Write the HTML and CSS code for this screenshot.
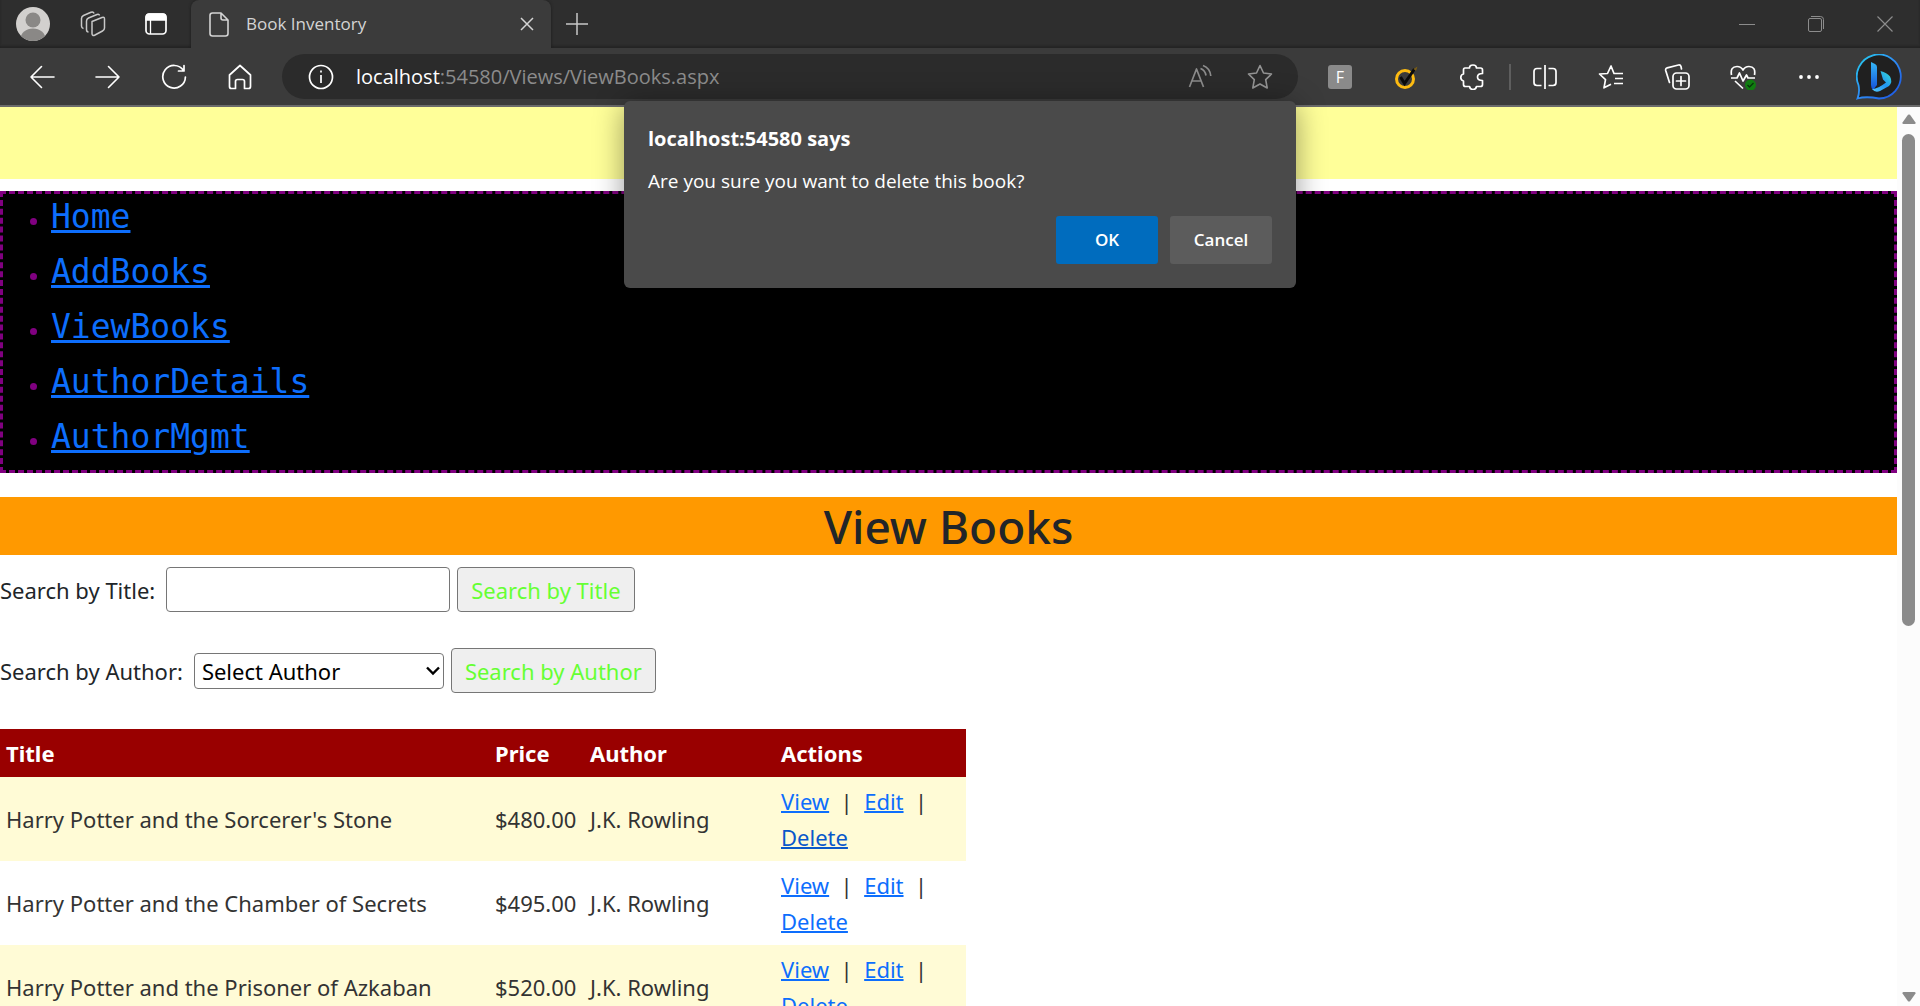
FILE: index.html
```html
<!DOCTYPE html>
<html lang="en">
<head>
<meta charset="utf-8">
<title>Book Inventory</title>
<link rel="stylesheet" href="styles.css">
</head>
<body>
<header class="browser">
  <div class="tabstrip">
    <div class="strip-tools">
      <button class="icon-btn avatar" aria-label="Profile"><svg width="34" height="34" viewBox="0 0 34 34"><defs><clipPath id="face"><circle cx="17" cy="17" r="17"/></clipPath></defs><g clip-path="url(#face)"><rect width="34" height="34" fill="#d2d0ce"/><circle cx="17" cy="13" r="7.5" fill="#8a8886"/><ellipse cx="17" cy="32" rx="12.5" ry="10.500" fill="#8a8886"/></g></svg></button>
      <button class="icon-btn" aria-label="Workspaces"><svg width="26" height="26" viewBox="0 0 26 26" fill="none" stroke="#c8c8c8" stroke-width="1.500" stroke-linejoin="round"><path d="M12 10.500 22 6.500Q24.500 5.500 24.500 8V17Q24.500 19 22.500 20L15 24Q12 25.500 12 22.500Z"/><path d="M8.500 21Q6.500 21 6.500 18.500V10Q6.500 8 8.500 7L17 3.500Q19 2.800 19.500 4.500"/><path d="M3.500 17.500Q1.500 17 1.500 15V7.500Q1.500 5.500 3.500 4.500L11 1.300Q13.500.500 14 2.500"/></svg></button>
      <button class="icon-btn" aria-label="Tab actions"><svg width="22" height="22" viewBox="0 0 22 22"><rect x="1" y="1" width="20" height="20" rx="3.500" fill="none" stroke="#fff" stroke-width="1.700"/><path d="M1 7V4Q1 1 4 1H18Q21 1 21 4V7ZM5.500 7V21" fill="#fff" stroke="#fff" stroke-width="1.300"/></svg></button>
    </div>
    <div class="tab">
      <svg width="20" height="25" viewBox="0 0 20 25" fill="none" stroke="#d4d4d4" stroke-width="1.600" stroke-linejoin="round"><path d="M1 3.500Q1 1 3.500 1H12L19 8V21.500Q19 24 16.500 24H3.500Q1 24 1 21.500ZM12 1V6Q12 8 14 8H19"/></svg>
      <span class="tab-title">Book Inventory</span>
      <button class="icon-btn" aria-label="Close tab"><svg width="14" height="14" viewBox="0 0 14 14" stroke="#d4d4d4" stroke-width="1.500"><path d="M1 1 13 13M13 1 1 13"/></svg></button>
    </div>
    <button class="icon-btn new-tab" aria-label="New tab"><svg width="22" height="22" viewBox="0 0 22 22" stroke="#c8c8c8" stroke-width="1.500"><path d="M11 0V22M0 11H22"/></svg></button>
    <div class="window-tools">
      <button class="icon-btn" aria-label="Minimize"><svg width="16" height="16" viewBox="0 0 16 16" stroke="#8c8c8c"><path d="M0 8.500H16"/></svg></button>
      <button class="icon-btn" aria-label="Restore"><svg width="16" height="16" viewBox="0 0 16 16" fill="none" stroke="#8c8c8c"><rect x=".500" y="2.500" width="13" height="13" rx="1.500"/><path d="M3 .500H12.500Q15.500.500 15.500 3.500V13"/></svg></button>
      <button class="icon-btn" aria-label="Close"><svg width="16" height="16" viewBox="0 0 16 16" stroke="#8c8c8c" stroke-width="1.200"><path d="M.500.500 15.500 15.500M15.500.500.500 15.500"/></svg></button>
    </div>
  </div>
  <div class="toolbar">
    <nav class="nav-tools" aria-label="Browser navigation">
      <button class="icon-btn" aria-label="Back"><svg width="26" height="26" viewBox="0 0 26 26" fill="none" stroke="#fff" stroke-width="1.600" stroke-linecap="round" stroke-linejoin="round"><path d="M25 13H2M12.500 2.500 2 13 12.500 23.500"/></svg></button>
      <button class="icon-btn" aria-label="Forward"><svg width="26" height="26" viewBox="0 0 26 26" fill="none" stroke="#fff" stroke-width="1.600" stroke-linecap="round" stroke-linejoin="round"><path d="M1 13H24M13.500 2.500 24 13 13.500 23.500"/></svg></button>
      <button class="icon-btn" aria-label="Refresh"><svg width="26" height="26" viewBox="0 0 26 26" fill="none" stroke="#fff" stroke-width="1.700" stroke-linecap="round" stroke-linejoin="round"><path d="M22.500 6.500A11.300 11.300 0 1 0 24.400 13M23 1.500V7H17.500"/></svg></button>
      <button class="icon-btn" aria-label="Home"><svg width="26" height="26" viewBox="0 0 26 26" fill="none" stroke="#fff" stroke-width="1.700" stroke-linejoin="round"><path d="M2.500 11 13 1.500 23.500 11V22.500Q23.500 24.500 21.500 24.500H17.500V17.500Q17.500 15.500 15.500 15.500H10.500Q8.500 15.500 8.500 17.500V24.500H4.500Q2.500 24.500 2.500 22.500Z"/></svg></button>
    </nav>
    <div class="address">
      <svg width="26" height="26" viewBox="0 0 26 26" fill="none" stroke="#fff" stroke-width="1.700"><circle cx="13" cy="13" r="11.500"/><path d="M13 11V19M13 6.500V8.500"/></svg>
      <div class="url"><span class="url-host">localhost</span>:54580/Views/ViewBooks.aspx</div>
      <button class="icon-btn" aria-label="Read aloud"><svg width="26" height="26" viewBox="0 0 26 26" fill="none" stroke="#8c8c8c" stroke-width="1.700" stroke-linejoin="round"><path d="M2.500 23 9.500 5 16.500 23M5 17H14M13.500 4.500Q18 6 19 11.500M16 1.500Q23 4 23.800 12"/></svg></button>
      <button class="icon-btn" aria-label="Add to favorites"><svg width="26" height="26" viewBox="0 0 26 26" fill="none" stroke="#949494" stroke-width="1.600" stroke-linejoin="round"><path d="M13 1.500 16.500 9 24.500 10 18.700 15.600 20.200 24 13 20 5.800 24 7.300 15.600 1.500 10 9.500 9Z"/></svg></button>
    </div>
    <div class="ext-tools">
      <button class="icon-btn ext-f" aria-label="Extension F">F</button>
      <button class="icon-btn" aria-label="Safe search"><svg width="26" height="26" viewBox="0 0 26 26" fill="none"><circle cx="12" cy="15" r="8.500" stroke="#fdbb11" stroke-width="3"/><path d="M7.500 13 11.500 19.500 21.500 5" stroke="#0b0b0b" stroke-width="3"/><path d="M20.500 5 24.500 2.500 23 7" fill="#7a5d16"/></svg></button>
      <button class="icon-btn" aria-label="Extensions"><svg width="26" height="26" viewBox="0 0 26 26" fill="none" stroke="#fff" stroke-width="1.700" stroke-linejoin="round"><path d="M5 4H9.500Q9.500 1 13 1T16.500 4H20.500Q22.500 4 22.500 6V9.500Q17.500 9.500 17.500 13T22.500 16.500V20.500Q22.500 22.500 20.500 22.500H16.500Q16 25.500 13 25.500T9.500 22.500H5.500Q3.500 22.500 3.500 20.500V17Q.800 16.500.800 13.500T3.500 10V6Q3.500 4 5 4Z"/></svg></button>
    </div>
    <div class="right-tools">
      <button class="icon-btn" aria-label="Split screen"><svg width="26" height="26" viewBox="0 0 26 26" fill="none" stroke="#fff" stroke-width="1.700"><path d="M9.500 4.500H5Q2 4.500 2 7.500V18.500Q2 21.500 5 21.500H9.500M16.500 4.500H21Q24 4.500 24 7.500V18.500Q24 21.500 21 21.500H16.500M13 1V25"/></svg></button>
      <button class="icon-btn" aria-label="Favorites"><svg width="26" height="26" viewBox="0 0 26 26" fill="none" stroke="#fff" stroke-width="1.700" stroke-linejoin="round"><path d="M20.500 9.500H16L13 2 9.500 9.500 1.500 10 7.500 15.600 6 23.800 13 20.200M17 9.500H25M17 14.500H25M16 19.500H25"/></svg></button>
      <button class="icon-btn" aria-label="Collections"><svg width="26" height="26" viewBox="0 0 26 26" fill="none" stroke="#fff" stroke-width="1.700" stroke-linecap="round"><path d="M5.500 18.500 1.700 6.500Q1.200 4.500 3.200 3.800L14.500 1Q16.500.700 17 2.500L17.500 5"/><rect x="9" y="9" width="16" height="16" rx="3.500"/><path d="M17 12.500V21.500M12.500 17H21.500"/></svg></button>
      <button class="icon-btn" aria-label="Browser essentials"><svg width="26" height="26" viewBox="0 0 26 26" fill="none" stroke="#fff" stroke-width="1.700" stroke-linejoin="round"><path d="M1.500 11Q0 2.500 7 2.500 11 2.500 13 6 15 2.500 19 2.500 26 2.500 24.500 11M1 14H7L9.500 9 13 17 16.500 11 18 14H25M5 17 13 24.500"/><circle cx="20.500" cy="21" r="5.500" fill="#107c10" stroke="none"/><path d="M17.500 21 19.500 23 23.500 19" stroke="#06330a" stroke-width="1.300"/></svg></button>
      <button class="icon-btn" aria-label="Settings and more"><svg width="26" height="26" viewBox="0 0 26 26" fill="#fff"><circle cx="5" cy="13" r="1.900"/><circle cx="13" cy="13" r="1.900"/><circle cx="21" cy="13" r="1.900"/></svg></button>
    </div>
    <button class="icon-btn bing" aria-label="Bing"><svg width="46" height="46" viewBox="0 0 46 46"><defs><linearGradient id="ring" x1="0" y1="0" x2="1" y2="1"><stop offset="0" stop-color="#25d0ee"/><stop offset=".5" stop-color="#2e8cf5"/><stop offset="1" stop-color="#1a4fe0"/></linearGradient><linearGradient id="stem" x1="0" y1="0" x2="0" y2="1"><stop offset="0" stop-color="#35b8f8"/><stop offset="1" stop-color="#1450d8"/></linearGradient><linearGradient id="bowl" x1="0" y1="1" x2="1" y2="0"><stop offset="0" stop-color="#54c8f8"/><stop offset=".5" stop-color="#2196f3"/><stop offset="1" stop-color="#38e0d0"/></linearGradient></defs><path d="M1.500 44.500Q4 38 2.500 31A22 22 0 1 1 23 44.500Q10 42 1.500 44.500Z" fill="#202020" stroke="url(#ring)" stroke-width="1.800"/><path d="M15 8 19 10Q21 11 21 13V31L17 36Q15 34 15 31Z" fill="url(#stem)"/><path d="M24.500 17Q31 18.500 34 22.500 37 28 33 32L24 37Q19 39 16 35 21 35.500 30 28.500L27 25.500Z" fill="url(#bowl)"/></svg></button>
  </div>
</header>

<div class="viewport">
  <main class="page">
    <div class="banner"></div>
    <nav class="site-nav" aria-label="Site">
      <ul>
        <li><a href="#home">Home</a></li>
        <li><a href="#addbooks">AddBooks</a></li>
        <li><a href="#viewbooks">ViewBooks</a></li>
        <li><a href="#authordetails">AuthorDetails</a></li>
        <li><a href="#authormgmt">AuthorMgmt</a></li>
      </ul>
    </nav>
    <h1>View Books</h1>
    <form class="search">
      <div class="search-row">
        <label for="title">Search by Title:</label>
        <input class="field" type="text" id="title">
        <button class="search-btn" type="button">Search by Title</button>
      </div>
      <div class="search-row">
        <label for="author">Search by Author:</label>
        <span class="select-box">
          <select id="author"><option>Select Author</option></select>
          <svg width="14" height="10" viewBox="0 0 14 10" fill="none" stroke="#000" stroke-width="2.400"><path d="M1 1.500 7 7.500 13 1.500"/></svg>
        </span>
        <button class="search-btn" type="button">Search by Author</button>
      </div>
    </form>
    <table class="books">
      <colgroup><col class="col-title"><col class="col-price"><col class="col-author"><col class="col-actions"></colgroup>
      <thead>
        <tr><th>Title</th><th>Price</th><th>Author</th><th>Actions</th></tr>
      </thead>
      <tbody>
        <tr><td>Harry Potter and the Sorcerer's Stone</td><td>$480.00</td><td>J.K. Rowling</td><td><a href="#v1">View</a>&nbsp; |&nbsp; <a href="#e1">Edit</a>&nbsp; |<br><a class="active" href="#d1">Delete</a></td></tr>
        <tr><td>Harry Potter and the Chamber of Secrets</td><td>$495.00</td><td>J.K. Rowling</td><td><a href="#v2">View</a>&nbsp; |&nbsp; <a href="#e2">Edit</a>&nbsp; |<br><a href="#d2">Delete</a></td></tr>
        <tr><td>Harry Potter and the Prisoner of Azkaban</td><td>$520.00</td><td>J.K. Rowling</td><td><a href="#v3">View</a>&nbsp; |&nbsp; <a href="#e3">Edit</a>&nbsp; |<br><a href="#d3">Delete</a></td></tr>
      </tbody>
    </table>
  </main>
  <div class="scrollbar" aria-hidden="true">
    <svg width="14" height="10" viewBox="0 0 14 10" fill="#8b8b8b"><path d="M6 .800Q7 0 8 .800L13.500 8.500Q14 10 12.500 10H1.500Q0 10 .500 8.500Z"/></svg>
    <div class="track"><div class="thumb"></div></div>
    <svg width="14" height="10" viewBox="0 0 14 10" fill="#8b8b8b"><path d="M6 9.200Q7 10 8 9.200L13.500 1.500Q14 0 12.500 0H1.500Q0 0 .500 1.500Z"/></svg>
  </div>
</div>

<div class="dialog" role="alertdialog" aria-labelledby="dialog-title" aria-describedby="dialog-text">
  <h2 id="dialog-title">localhost:54580 says</h2>
  <p id="dialog-text">Are you sure you want to delete this book?</p>
  <div class="dialog-actions">
    <button class="primary" type="button">OK</button>
    <button type="button">Cancel</button>
  </div>
</div>
</body>
</html>
```
FILE: styles.css
```css
* {
  box-sizing: border-box;
}

body {
  margin: 0;
  height: 100vh;
  display: flex;
  flex-direction: column;
  overflow: hidden;
  position: relative;
  background: #fff;
  color: #212529;
  font-family: "Noto Sans", "Open Sans", sans-serif;
  font-size: 22px;
  line-height: 36px;
}

button,
input,
select {
  font: inherit;
}

svg {
  display: block;
  flex: none;
}

/* Browser frame */
.browser {
  flex: none;
  background: #3b3b3b;
  border-bottom: 2px solid #6b6b6b;
  font-family: "Open Sans", sans-serif;
}

.icon-btn {
  display: flex;
  align-items: center;
  justify-content: center;
  flex: none;
  padding: 0;
  border: 0;
  background: none;
}

.tabstrip {
  display: flex;
  align-items: center;
  height: 48px;
  background: #2e2e2e;
  box-shadow: inset 0 -2px 2px #242424;
}

.strip-tools {
  display: flex;
  align-items: center;
  gap: 34px;
  width: 191px;
  padding-left: 16px;
}

.strip-tools .avatar {
  margin-right: -4px;
}

.strip-tools .icon-btn:last-child {
  margin-left: 5px;
}

.tab {
  display: flex;
  align-items: center;
  width: 360px;
  height: 48px;
  padding: 0 17px 0 18px;
  border-radius: 8px 8px 0 0;
  background: #3b3b3b;
  box-shadow: 0 0 3px #1c1c1c;
  clip-path: inset(0 -4px 0 -4px);
}

.tab-title {
  flex: 1;
  margin-left: 17px;
  color: #d4d4d4;
  font-size: 17px;
}

.new-tab {
  margin-left: 15px;
}

.window-tools {
  display: flex;
  gap: 53px;
  margin-left: auto;
  padding-right: 27px;
}

.toolbar {
  display: flex;
  align-items: center;
  height: 57px;
  padding: 0 18px 0 29px;
}

.nav-tools {
  display: flex;
  gap: 40px;
}

.address {
  flex: 1;
  display: flex;
  align-items: center;
  height: 45px;
  margin-left: 29px;
  padding: 0 25px 0 26px;
  gap: 34px;
  border-radius: 23px;
  background: #2b2b2b;
}

.url {
  flex: 1;
  margin-left: -12px;
  color: #8c8c8c;
  font-size: 20px;
}

.url-host {
  color: #fff;
}

.ext-tools {
  display: flex;
  align-items: center;
  gap: 41px;
  padding: 0 23px 0 30px;
  border-right: 2px solid #5e5e5e;
}

.ext-f {
  width: 24px;
  height: 24px;
  border-radius: 3px;
  background: #8a8a8a;
  color: #fff;
  font-size: 16px;
}

.right-tools {
  display: flex;
  gap: 40px;
  padding: 0 34px 0 21px;
}

/* Page and scrollbar */
.viewport {
  flex: 1;
  min-height: 0;
  display: flex;
}

.page {
  flex: 1;
  overflow: hidden;
}

.scrollbar {
  display: flex;
  flex-direction: column;
  align-items: center;
  justify-content: space-between;
  width: 23px;
  padding: 7px 0 4px;
  background: #fcfcfc;
}

.track {
  flex: 1;
  width: 13px;
  margin: 10px 0;
}

.thumb {
  height: 58%;
  border-radius: 7px;
  background: #8b8b8b;
}

.banner {
  height: 72px;
  background: #ff9;
}

.site-nav {
  margin: 12px 0 24px;
  border: 3px dashed purple;
  background: #000;
  color: purple;
  font-family: "DejaVu Sans Mono", monospace;
}

.site-nav ul {
  margin: 0;
  padding: 0 0 1px 48px;
}

.site-nav li {
  height: 55px;
  font-size: 24px;
}

.site-nav a {
  font-size: 33px;
  line-height: 46px;
  text-decoration-thickness: 3px;
}

a {
  color: #0d6efd;
}

a.active {
  color: #0a58ca;
}

h1 {
  margin: 0 0 12px;
  background: #f90;
  font-size: 46px;
  font-weight: 500;
  line-height: 58px;
  text-align: center;
}

.search {
  display: flex;
  flex-direction: column;
  gap: 36px;
  margin-bottom: 36px;
}

.search-row {
  display: flex;
  align-items: center;
  gap: 7px;
  height: 45px;
}

.search-row label {
  padding-right: 4px;
}

.field {
  width: 284px;
  height: 45px;
  border: 1px solid #767676;
  border-radius: 4px;
}

.search-btn {
  height: 45px;
  padding: 0 13px;
  border: 1px solid #767676;
  border-radius: 4px;
  background: #efefef;
  color: #6f3;
}

.select-box {
  display: grid;
  align-items: center;
  width: 250px;
}

.select-box select,
.select-box svg {
  grid-area: 1 / 1;
}

.select-box select {
  appearance: none;
  height: 36px;
  padding: 0 7px;
  border: 1px solid #767676;
  border-radius: 4px;
  background: #fff;
  color: #000;
  line-height: 32px;
}

.select-box svg {
  justify-self: end;
  margin-right: 4px;
  pointer-events: none;
}

.books {
  width: 966px;
  table-layout: fixed;
  border-collapse: collapse;
  color: #333;
}

.col-title {
  width: 489px;
}

.col-price {
  width: 95px;
}

.col-author,
.col-actions {
  width: 191px;
}

.books th,
.books td {
  padding: 6px;
  text-align: left;
  white-space: nowrap;
}

.books th {
  background: #900;
  color: #fff;
  font-weight: 700;
}

.books tbody tr:nth-child(odd) {
  background: #fffbd6;
}

.books a {
  text-decoration-thickness: 2px;
}

/* Confirm dialog */
.dialog {
  position: absolute;
  top: 101px;
  left: calc(50% - 336px);
  width: 672px;
  padding: 20px 24px 24px;
  border-radius: 6px;
  background: #4a4a4a;
  box-shadow: 0 4px 30px rgba(0, 0, 0, 0.4);
  color: #fff;
  font-family: "Open Sans", sans-serif;
  font-size: 19px;
}

.dialog h2 {
  margin: 0 0 6px;
  font-size: 20px;
  font-weight: 700;
}

.dialog p {
  margin: 0 0 17px;
}

.dialog-actions {
  display: flex;
  justify-content: flex-end;
  gap: 12px;
}

.dialog-actions button {
  width: 102px;
  height: 48px;
  border: 0;
  border-radius: 3px;
  background: #5c5c5c;
  color: #fff;
  font-size: 17px;
  font-weight: 600;
}

.dialog-actions .primary {
  background: #006cbe;
}
```
